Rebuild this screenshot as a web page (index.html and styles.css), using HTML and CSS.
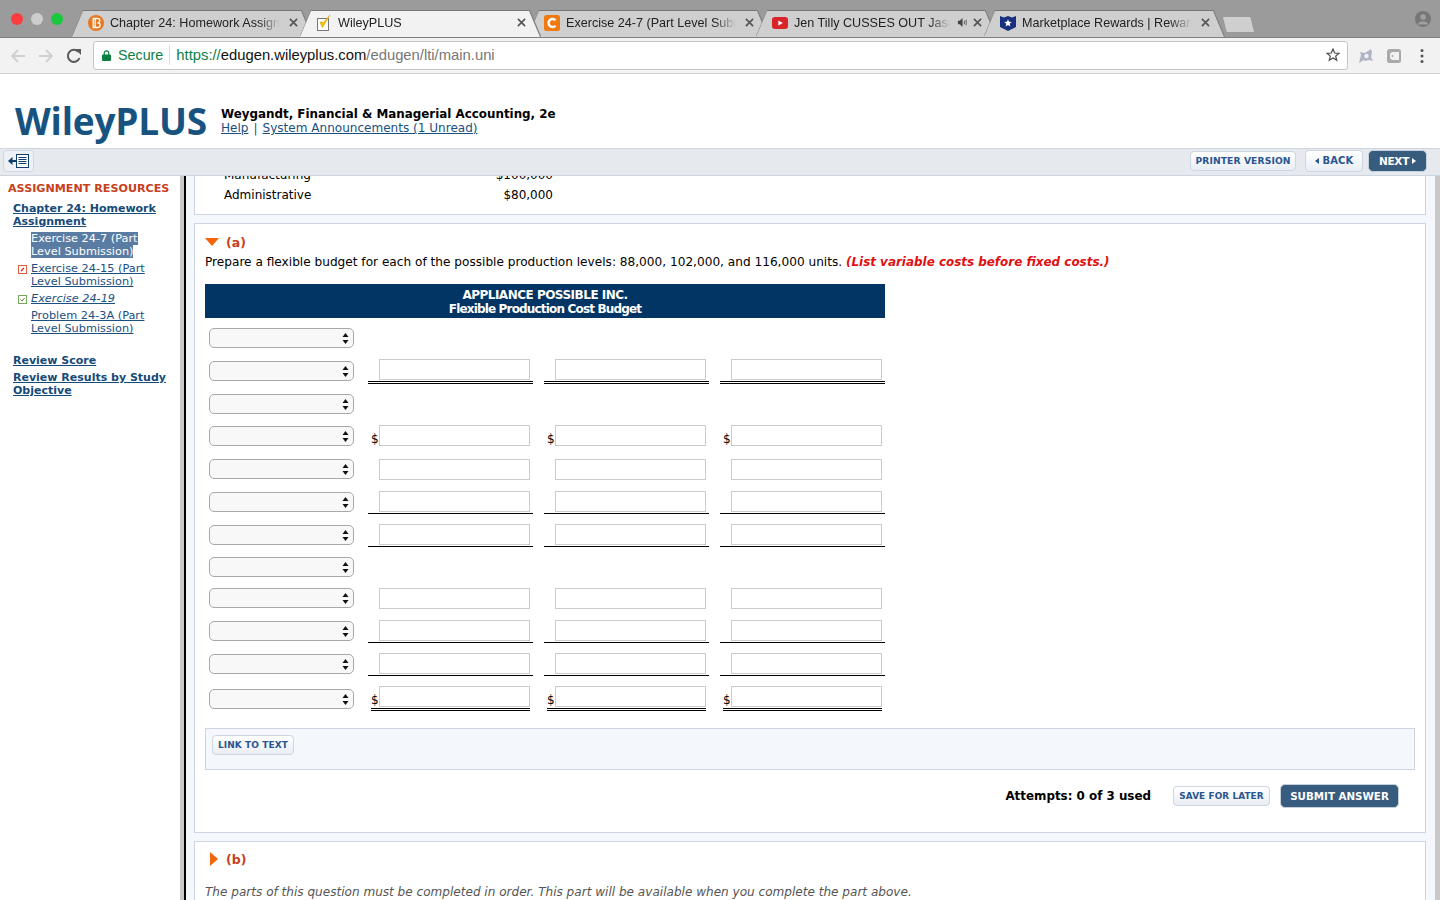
FILE: index.html
```html
<!DOCTYPE html>
<html lang="en">
<head>
<meta charset="utf-8">
<title>WileyPLUS</title>
<link rel="stylesheet" href="styles.css">
</head>
<body>
<div class="tabstrip">
  <div class="lights"><i class="light red"></i><i class="light grey"></i><i class="light green"></i></div>
  <div class="tabs">
    <div class="tab">
      <svg class="fav" viewBox="0 0 16 16"><circle cx="8" cy="8" r="8" fill="#e8781f"/><path d="M5.200 3.500h4.600q2 0 2 2 0 1.700-1.500 2.300 1.900.5 1.900 2.300 0 2.400-2.400 2.400H5.200zM7.200 3.500v9" fill="none" stroke="#fff" stroke-width="1.300"/></svg>
      <span class="tab-title">Chapter 24: Homework Assign</span>
      <svg class="close" viewBox="0 0 10 10"><path d="M1 1l8 8M9 1l-8 8"/></svg>
    </div>
    <div class="tab active">
      <svg class="fav" viewBox="0 0 16 16"><rect x="1.500" y="3.500" width="11" height="12" fill="#fff" stroke="#777"/><path d="M4 7.500l2.500 5L14 0 7 8 5.500 6.500z" fill="#f2c200" stroke="#e0a800" stroke-width=".6"/></svg>
      <span class="tab-title">WileyPLUS</span>
      <svg class="close" viewBox="0 0 10 10"><path d="M1 1l8 8M9 1l-8 8"/></svg>
    </div>
    <div class="tab">
      <svg class="fav" viewBox="0 0 16 16"><rect width="16" height="16" rx="2.500" fill="#ee7a10"/><path d="M11.500 5.300A4 4 0 1 0 11.500 10.700" fill="none" stroke="#fff" stroke-width="2.400"/></svg>
      <span class="tab-title">Exercise 24-7 (Part Level Subm</span>
      <svg class="close" viewBox="0 0 10 10"><path d="M1 1l8 8M9 1l-8 8"/></svg>
    </div>
    <div class="tab">
      <svg class="fav" viewBox="0 0 16 16"><rect y="2" width="16" height="12" rx="3" fill="#d9252a"/><path d="M6.300 5.500l4.500 2.500-4.500 2.500z" fill="#fff"/></svg>
      <span class="tab-title">Jen Tilly CUSSES OUT Jason</span>
      <svg class="speaker" viewBox="0 0 12 12"><path d="M1 4h2l3-3v10L3 8H1z" fill="#444"/><path d="M8 4v4M10 3v6" stroke="#555" fill="none"/></svg>
      <svg class="close" viewBox="0 0 10 10"><path d="M1 1l8 8M9 1l-8 8"/></svg>
    </div>
    <div class="tab">
      <svg class="fav" viewBox="0 0 16 16"><path d="M0 1l4 1.500L8 1l4 1.500L16 1v11l-8 4-8-4z" fill="#16307f"/><path d="M8 4.200l1.100 2.500 2.700.2-2.100 1.800.7 2.700L8 9.900l-2.400 1.500.7-2.700-2.100-1.800 2.700-.2z" fill="#fff"/></svg>
      <span class="tab-title">Marketplace Rewards | Reward</span>
      <svg class="close" viewBox="0 0 10 10"><path d="M1 1l8 8M9 1l-8 8"/></svg>
    </div>
    <div class="newtab"></div>
  </div>
  <svg class="avatar" viewBox="0 0 16 16"><circle cx="8" cy="8" r="8" fill="#777"/><circle cx="8" cy="6" r="2.800" fill="#a0a0a0"/><path d="M3 12.500q5-4.500 10 0v1H3z" fill="#a0a0a0"/></svg>
</div>

<div class="toolbar">
  <svg class="nav-ico" viewBox="0 0 16 16"><path d="M15 8H2M8 2L2 8l6 6" fill="none" stroke="#cfcfcf" stroke-width="1.800"/></svg>
  <svg class="nav-ico" viewBox="0 0 16 16"><path d="M1 8h13M8 2l6 6-6 6" fill="none" stroke="#cfcfcf" stroke-width="1.800"/></svg>
  <svg class="nav-ico" viewBox="0 0 16 16"><path d="M13.500 10A6 6 0 1 1 12.300 3.800" fill="none" stroke="#5a5a5a" stroke-width="2"/><path d="M9.500 1h6v6z" transform="translate(-.5 0)" fill="#5a5a5a"/></svg>
  <div class="omnibox">
    <svg class="lock" viewBox="0 0 10 12"><rect y="5" width="10" height="7" rx="1" fill="#0b8043"/><path d="M2.500 5.500V3.300a2.500 2.500 0 0 1 5 0v2.200" fill="none" stroke="#0b8043" stroke-width="1.300"/></svg>
    <span class="secure">Secure</span>
    <span class="url"><span class="url-scheme">https://</span><span class="url-host">edugen.wileyplus.com</span>/edugen/lti/main.uni</span>
    <svg class="star" viewBox="0 0 14 14"><path d="M7 1l1.700 4 4.300.3-3.300 2.800 1 4.200L7 10l-3.700 2.300 1-4.200L1 5.300 5.300 5z" fill="none" stroke="#4a4a4a" stroke-width="1.200"/></svg>
  </div>
  <div class="ext">
    <svg class="ext-ico" viewBox="0 0 16 16"><path d="M1 15l2-8-1-3 5 1 6-4 1 3-1 5 2 4-4-1-4 1-1-1z" fill="#b0b4c4"/><circle cx="8.500" cy="8" r="2.200" fill="#eef0f4"/></svg>
    <svg class="ext-ico" viewBox="0 0 16 16"><rect x="1" y="1" width="14" height="14" rx="2.500" fill="#aaa"/><path d="M4 6l2-2h7v8H6l-2-2z" fill="#f2f2f2"/><circle cx="6.500" cy="8" r="1" fill="#aaa"/></svg>
    <svg class="ext-ico" viewBox="0 0 16 16"><circle cx="8" cy="2.500" r="1.500" fill="#555"/><circle cx="8" cy="8" r="1.500" fill="#555"/><circle cx="8" cy="13.500" r="1.500" fill="#555"/></svg>
  </div>
</div>

<header class="site-header">
  <div class="logo">WileyPLUS</div>
  <div class="course">
    <div class="course-name">Weygandt, Financial &amp; Managerial Accounting, 2e</div>
    <div class="course-links"><a href="#">Help</a><span class="sep">|</span><a href="#">System Announcements (1 Unread)</a></div>
  </div>
</header>

<div class="actionbar">
  <button class="toggle" type="button">
    <svg viewBox="0 0 21 14"><path d="M0 7l4.500-4v8z" fill="#0e3f6e"/><path d="M4 6h4v2H4z" fill="#0e3f6e"/><rect x="8.500" y=".5" width="12" height="13" fill="#fff" stroke="#0e3f6e"/><path d="M10.500 3.500h8M10.500 5.500h8M10.500 7.500h8M10.500 9.500h8" stroke="#0e3f6e"/></svg>
  </button>
  <div class="actions">
    <button class="btn printer" type="button">PRINTER VERSION</button>
    <button class="btn back" type="button"><i class="tri-left"></i>BACK</button>
    <button class="btn-dark next" type="button">NEXT<i class="tri-right"></i></button>
  </div>
</div>

<div class="content">
  <nav class="sidebar">
    <h2>ASSIGNMENT RESOURCES</h2>
    <a class="nav-strong chapter" href="#">Chapter 24: Homework Assignment</a>
    <ul class="items">
      <li><a class="current" href="#">Exercise 24-7 (Part Level Submission)</a></li>
      <li><svg class="mark" viewBox="0 0 9 9"><rect x=".5" y=".5" width="8" height="8" fill="#fff" stroke="#e0603c"/><path d="M3 6l3-3" stroke="#d22" stroke-width="1.200"/></svg><a href="#">Exercise 24-15 (Part Level Submission)</a></li>
      <li><svg class="mark" viewBox="0 0 9 9"><rect x=".5" y=".5" width="8" height="8" fill="#fff" stroke="#79a85c"/><path d="M2.500 4.500l1.500 1.500 2.500-3" stroke="#4b8a2e" fill="none"/></svg><a class="ital" href="#">Exercise 24-19</a></li>
      <li><a href="#">Problem 24-3A (Part Level Submission)</a></li>
    </ul>
    <a class="nav-strong score" href="#">Review Score</a>
    <a class="nav-strong results" href="#">Review Results by Study Objective</a>
  </nav>
  <div class="rule-left"></div>
  <main class="main">
    <section class="panel panel-info">
      <div class="info-row"><span>Manufacturing</span><span>$100,000</span></div>
      <div class="info-row"><span>Administrative</span><span>$80,000</span></div>
    </section>

    <section class="panel panel-a">
      <div class="part-head"><i class="tri-open"></i><span class="part-label">(a)</span></div>
      <p class="prompt">Prepare a flexible budget for each of the possible production levels: 88,000, 102,000, and 116,000 units. <em>(List variable costs before fixed costs.)</em></p>
      <div class="budget-head">APPLIANCE POSSIBLE INC.<br><span class="head-sub">Flexible Production Cost Budget</span></div>
      <div class="budget">
        <select class="sel"></select>

        <select class="sel s2"></select>
        <div class="cell dbl"><input type="text"></div>
        <div class="cell dbl"><input type="text"></div>
        <div class="cell dbl"><input type="text"></div>

        <select class="sel"></select>

        <select class="sel s1"></select>
        <div class="cell dollar"><span class="cur">$</span><input type="text"></div>
        <div class="cell dollar"><span class="cur">$</span><input type="text"></div>
        <div class="cell dollar"><span class="cur">$</span><input type="text"></div>

        <select class="sel"></select>
        <div class="cell"><input type="text"></div>
        <div class="cell"><input type="text"></div>
        <div class="cell"><input type="text"></div>

        <select class="sel s1"></select>
        <div class="cell sgl"><input type="text"></div>
        <div class="cell sgl"><input type="text"></div>
        <div class="cell sgl"><input type="text"></div>

        <select class="sel s1"></select>
        <div class="cell sgl"><input type="text"></div>
        <div class="cell sgl"><input type="text"></div>
        <div class="cell sgl"><input type="text"></div>

        <select class="sel"></select>

        <select class="sel"></select>
        <div class="cell"><input type="text"></div>
        <div class="cell"><input type="text"></div>
        <div class="cell"><input type="text"></div>

        <select class="sel s1"></select>
        <div class="cell sgl"><input type="text"></div>
        <div class="cell sgl"><input type="text"></div>
        <div class="cell sgl"><input type="text"></div>

        <select class="sel s1"></select>
        <div class="cell sgl"><input type="text"></div>
        <div class="cell sgl"><input type="text"></div>
        <div class="cell sgl"><input type="text"></div>

        <select class="sel s3"></select>
        <div class="cell dollar total"><span class="cur">$</span><input type="text"></div>
        <div class="cell dollar total"><span class="cur">$</span><input type="text"></div>
        <div class="cell dollar total"><span class="cur">$</span><input type="text"></div>
      </div>
      <div class="linkbox"><button class="btn link-text" type="button">LINK TO TEXT</button></div>
      <div class="submit-row">
        <span class="attempts">Attempts: 0 of 3 used</span>
        <button class="btn save" type="button">SAVE FOR LATER</button>
        <button class="btn-dark submit" type="button">SUBMIT ANSWER</button>
      </div>
    </section>

    <section class="panel panel-b">
      <div class="part-head-b"><i class="tri-closed"></i><span class="part-label">(b)</span></div>
      <p class="locked">The parts of this question must be completed in order. This part will be available when you complete the part above.</p>
    </section>
  </main>
  <div class="rule-right"></div>
</div>
</body>
</html>
```

FILE: styles.css
```css
* { box-sizing: border-box; }
html, body { margin: 0; padding: 0; }
body {
  width: 1440px; height: 900px; overflow: hidden;
  display: flex; flex-direction: column;
  background: #fff; color: #000;
  font-family: "DejaVu Sans", Verdana, sans-serif;
  font-size: 12px;
}
a { color: #1a4f7f; }
button { font-family: inherit; cursor: pointer; }

/* browser chrome */
.tabstrip {
  height: 38px; flex: none; background: #9b9b9b;
  border-bottom: 1px solid #7f7f7f;
  display: flex; position: relative;
  font-family: "Liberation Sans", Arial, sans-serif;
}
.lights { display: flex; gap: 8px; padding: 13px 0 0 11px; width: 72px; flex: none; }
.light { width: 12px; height: 12px; border-radius: 50%; }
.red { background: #fc3d3f; }
.grey { background: #cdcdcd; }
.green { background: #1ac93c; }
.tabs { display: flex; padding-top: 11px; flex: 1; }
.tab {
  width: 240px; height: 26px; margin-right: -12px; position: relative;
  display: flex; align-items: center; padding: 0 14px 3px 16px;
  font-size: 12.600px; color: #222;
  filter: drop-shadow(0 -1px 0 #777) drop-shadow(1px 0 0 #888);
}
.tab::before {
  content: ""; position: absolute; inset: 0; background: #cfcfcf;
  clip-path: polygon(0 100%, 11px 0, calc(100% - 11px) 0, 100% 100%);
}
.tab.active { z-index: 2; }
.tab.active::before { background: #f2f2f2; }
.tab > * { position: relative; }
.fav { width: 16px; height: 16px; flex: none; margin-right: 6px; }
.tab-title {
  flex: 1; min-width: 0; white-space: nowrap;
  -webkit-mask-image: linear-gradient(90deg, #000 calc(100% - 24px), transparent calc(100% - 2px));
  mask-image: linear-gradient(90deg, #000 calc(100% - 24px), transparent calc(100% - 2px));
  -webkit-mask-repeat: no-repeat; mask-repeat: no-repeat;
}
.tab.active .tab-title { -webkit-mask-image: none; mask-image: none; }
.close { width: 9px; height: 9px; flex: none; margin-left: 7px; stroke: #555; stroke-width: 1.8; fill: none; }
.speaker { width: 11px; height: 11px; flex: none; margin-left: 4px; margin-right: -2px; }
.newtab {
  width: 31px; height: 15px; margin: 6px 0 0 11px; background: #cfcfcf;
  clip-path: polygon(0 0, 88% 0, 100% 100%, 12% 100%);
  align-self: flex-start;
}
.avatar { width: 16px; height: 16px; position: absolute; left: 1415px; top: 11px; }

.toolbar {
  height: 36px; flex: none; background: #f2f2f2; border-bottom: 1px solid #cfcfcf;
  display: flex; align-items: center; padding-left: 10px;
}
.nav-ico { width: 16px; height: 16px; flex: none; margin-right: 12px; }
.omnibox {
  width: 1255px; height: 29px; margin-left: -1px; margin-top: -1px;
  background: #fff; border: 1px solid #c6c6c6; border-radius: 3px;
  display: flex; align-items: center; padding-left: 8px;
  font-family: "Liberation Sans", Arial, sans-serif; font-size: 14.300px;
}
.lock { width: 9px; height: 11px; flex: none; margin-right: 7px; }
.secure { color: #0b8043; padding-right: 6px; border-right: 1px solid #ddd; line-height: 20px; margin-right: 6px; }
.url { color: #777; flex: 1; white-space: nowrap; font-size: 14.800px; }
.url-scheme { color: #0b8043; }
.url-host { color: #111; }
.star { width: 14px; height: 14px; margin-right: 7px; flex: none; }
.ext { display: flex; gap: 12px; margin-left: 10px; }
.ext-ico { width: 16px; height: 16px; flex: none; }

/* site header */
.site-header { height: 74px; flex: none; display: flex; padding: 24px 0 0 15px; }
.logo {
  font-family: "Open Sans", "Liberation Sans", sans-serif; font-weight: 700;
  font-size: 37px; line-height: 46px; color: #18537f; width: 206px; letter-spacing: -.2px;
}
.course { padding-top: 9px; }
.course-name { font-weight: 700; font-size: 11.900px; line-height: 15px; }
.course-links { font-size: 12.050px; line-height: 15px; color: #1a4f7f; margin-top: -1px; }
.sep { margin: 0 5px; }

.actionbar {
  height: 28px; flex: none; background: #e6eaef;
  border-top: 1px solid #cdd5e0; border-bottom: 1px solid #cdd5e0;
  display: flex; justify-content: space-between; align-items: center; padding: 0 13px 2px 3px;
}
.toggle {
  width: 31px; height: 22px; padding: 0; border: 1px solid #cfd8e3; border-radius: 4px;
  background: #edf1f5; display: flex; align-items: center; justify-content: center;
}
.toggle svg { width: 21px; height: 14px; }
.actions { display: flex; align-items: center; }
.btn {
  border: 1px solid #cdd6e2; border-radius: 4px; padding: 0;
  background: linear-gradient(#fff, #e9eef4);
  color: #2a5590; font-weight: 700; font-size: 9.200px; line-height: 1;
  display: inline-flex; align-items: center; justify-content: center; letter-spacing: .1px;
}
.btn-dark {
  border: 1px solid #c5d0dd; border-radius: 5px; padding: 0; background: #375c7e; color: #fff;
  font-weight: 700; font-size: 10.300px; line-height: 1;
  display: inline-flex; align-items: center; justify-content: center;
}
.printer { width: 106px; height: 20px; margin-right: 9px; }
.back { width: 58px; height: 22px; margin-right: 5px; font-size: 10px; }
.next { width: 59px; height: 22px; font-size: 10.500px; letter-spacing: -.3px; }
.tri-left, .tri-right { width: 0; height: 0; border-style: solid; display: inline-block; }
.tri-left { border-width: 3.500px 4px 3.500px 0; border-color: transparent #2a5590 transparent transparent; margin-right: 4px; }
.tri-right { border-width: 3.500px 0 3.500px 4px; border-color: transparent transparent transparent #fff; margin-left: 3px; }

/* body layout */
.content { flex: 1; min-height: 0; display: flex; }
.sidebar { width: 180px; flex: none; padding: 6px 0 0 8px; font-size: 11.300px; line-height: 13px; }
.sidebar h2 { margin: 0; font-size: 11.150px; line-height: 14px; color: #c8401c; font-weight: 700; }
.nav-strong { display: block; font-weight: 700; margin-left: 5px; font-size: 11px; color: #164a78; }
.chapter { margin-top: 6px; width: 150px; }
.items { list-style: none; margin: 4px 0 0; padding: 0 0 0 23px; width: 150px; }
.items li { position: relative; margin-bottom: 4px; }
.items a { color: #1a4f7f; }
.items .current { background: #5a7ca3; color: #fff; text-decoration: none; }
.items .ital { font-style: italic; }
.mark { width: 9px; height: 9px; position: absolute; left: -13px; top: 3px; }
.score { margin-top: 19px; }
.results { margin-top: 4px; width: 160px; }
.rule-left { width: 6px; flex: none; background: #c9c9c9; border-right: 2px solid #000; }
.rule-right { width: 5px; flex: none; background: #c9c9c9; }
.main { flex: 1; min-width: 0; overflow: hidden; background: #f4f7fb; padding: 0 9px 0 8px; }
.panel { background: #fff; border: 1px solid #cdd5e2; }
.panel-info { height: 59px; margin-top: -20px; padding: 8px 872px 0 29px; }
.info-row { display: flex; justify-content: space-between; line-height: 20px; }
.panel-a { height: 610px; margin-top: 8px; padding: 11px 10px 0; }
.part-head { display: flex; align-items: center; height: 14px; }
.tri-open {
  width: 0; height: 0; border-style: solid; border-width: 8px 7.500px 0;
  border-color: #f4640a transparent transparent; margin-right: 6px;
}
.part-label { color: #c8401c; font-weight: 700; font-size: 12.500px; margin-left: 1px; }
.prompt { margin: 6px 0 0; line-height: 14px; font-size: 12.140px; }
.prompt em { color: #e01010; font-weight: 700; font-size: 11.950px; }
.budget-head {
  width: 680px; height: 34px; margin-top: 15px; padding-top: 4px; background: #023564; color: #fff;
  text-align: center; font-weight: 700; font-size: 12px; line-height: 14px; letter-spacing: -.5px;
}
.head-sub { letter-spacing: -.83px; }
.budget {
  display: grid; grid-template-columns: 152px 165px 165px 165px; column-gap: 11px;
  grid-template-rows: 31px 35px 31px 34px 32px 33px 33px 31px 32px 33px 33px 25px;
  padding-top: 10px;
}
.sel {
  grid-column: 1; width: 145px; height: 20px; margin: 0 0 0 4px;
  -webkit-appearance: none; appearance: none;
  border: 1px solid #a8a8a8; border-radius: 5px; background-color: #f8f8f8;
  background-image: url("data:image/svg+xml,%3Csvg xmlns='http://www.w3.org/2000/svg' width='7' height='11'%3E%3Cpath d='M3.500 0l3 4h-6zM3.500 11l3-4h-6z' fill='%23111'/%3E%3C/svg%3E");
  background-repeat: no-repeat; background-position: right 4px center;
}
.s1 { margin-top: 1px; }
.s2 { margin-top: 2px; }
.s3 { margin-top: 3px; }
.cell { padding-left: 11px; align-self: start; display: flex; }
.cell input {
  width: 151px; height: 21px; padding: 0; flex: none;
  border: 1px solid #cbcbcb; border-radius: 0; background: #fff; display: block;
}
.dbl { height: 25px; border-bottom: 3px double #000; }
.sgl { height: 23px; border-bottom: 1px solid #000; }
.dollar { padding-left: 3px; }
.cur { width: 8px; font-size: 12px; line-height: 13px; align-self: flex-end; flex: none; font-weight: 400; }
.total { margin-left: 3px; width: 159px; padding-left: 0; height: 25px; border-bottom: 3px double #000; }
.total .cur { align-self: flex-start; margin-top: 8px; }
.linkbox {
  height: 42px; margin-top: 17px; background: #f4f7fb; border: 1px solid #cdd5e2; padding: 6px;
}
.link-text { width: 82px; height: 20px; font-size: 9px; }
.submit-row { display: flex; justify-content: flex-end; align-items: center; margin: 14px 16px 0 0; height: 24px; }
.attempts { font-weight: 700; font-size: 11.900px; margin: 0 22px 0 0; }
.save { width: 97px; height: 20px; margin-right: 10px; font-size: 8.900px; }
.submit { width: 119px; height: 24px; }
.panel-b { height: 120px; margin-top: 8px; padding: 9px 10px 0; }
.part-head-b { display: flex; align-items: center; height: 16px; }
.tri-closed {
  width: 0; height: 0; border-style: solid; border-width: 7.500px 0 7.500px 8px;
  border-color: transparent transparent transparent #f4640a; margin: 0 7px 0 5px;
}
.locked { margin: 17px 0 0; font-style: italic; color: #555; line-height: 16px; font-size: 12.070px; }
```
